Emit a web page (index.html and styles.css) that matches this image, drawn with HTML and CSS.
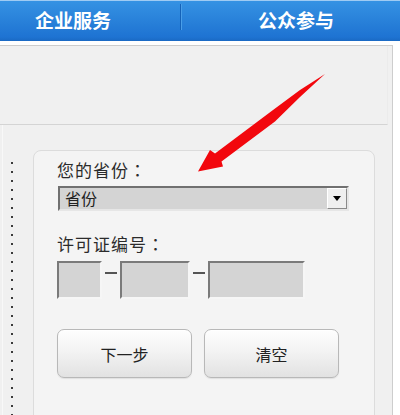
FILE: index.html
```html
<!DOCTYPE html>
<html lang="zh-CN">
<head>
<meta charset="utf-8">
<title>许可证查询</title>
<link rel="stylesheet" href="styles.css">
</head>
<body>
<nav class="nav">
  <div class="nav-item nav-first">企业服务</div>
  <span class="nav-sep"></span>
  <div class="nav-item nav-second">公众参与</div>
</nav>
<div class="panel">
  <div class="panel-top"></div>
  <div class="panel-body">
    <div class="rail"><div class="dots"></div></div>
    <form class="form-box" onsubmit="return false">
      <div class="label">您的省份<span class="colon" lang="zh-TW">：</span></div>
      <div class="select">
        <span class="select-text">省份</span>
        <span class="select-btn"><span class="tri"></span></span>
      </div>
      <div class="label label-2">许可证编号<span class="colon" lang="zh-TW">：</span></div>
      <div class="inputs">
        <div class="field f1"></div>
        <span class="dash"></span>
        <div class="field f2"></div>
        <span class="dash"></span>
        <div class="field f3"></div>
      </div>
      <div class="buttons">
        <button type="button" class="btn">下一步</button>
        <button type="button" class="btn">清空</button>
      </div>
    </form>
  </div>
</div>
<svg class="annot" width="400" height="415" viewBox="0 0 400 415" aria-hidden="true">
  <polygon points="198,171.5 210,150 215,153.5 273,110 300,90 325,74 300,97 275,121.5 221.5,161.5 223,166.5" fill="#f2070d"/>
</svg>
</body>
</html>
```

FILE: styles.css
```css
html, body {
  margin: 0;
  padding: 0;
  background: #ffffff;
  font-family: "Noto Sans CJK SC", "Noto Sans", sans-serif;
  overflow: hidden;
}

.nav {
  display: flex;
  height: 41px;
  box-sizing: border-box;
  border-top: 1px solid #9fcbf3;
  background: linear-gradient(#3592e3, #1e73d2 90%, #1a69c4);
  color: #ffffff;
  font-weight: bold;
  font-size: 19px;
  line-height: 38px;
}

.nav-item {
  white-space: nowrap;
}

.nav-first {
  width: 145px;
  padding-left: 35px;
}

.nav-sep {
  width: 1px;
  height: 26px;
  margin-top: 3px;
  background: #1462b8;
  box-shadow: 1px 0 0 #4a9ee8;
}

.nav-second {
  padding-left: 77px;
}

.panel {
  margin-top: 4px;
  width: 393px;
  height: 370px;
  box-sizing: border-box;
  border-top: 1px solid #cdcdcd;
  border-right: 1px solid #cdcdcd;
  background: #f0f0f0;
  overflow: hidden;
}

.panel-top {
  height: 79px;
  margin-right: 4px;
  box-sizing: border-box;
  border-bottom: 1px solid #d4d4d4;
  border-right: 1px solid #ebebeb;
}

.panel-body {
  display: flex;
  height: 300px;
}

.rail {
  flex: none;
  box-sizing: border-box;
  border-left: 1px solid #f8f8f8;
  margin-left: 2px;
  width: 31px;
  display: flex;
  flex-direction: column;
}

.dots {
  margin-top: 37px;
  margin-left: 8px;
  width: 2px;
  flex: 1;
  background-image: linear-gradient(#3a3a3a 2px, transparent 2px);
  background-size: 2px 9px;
  background-repeat: repeat-y;
}

.form-box {
  margin: 25px 0 0 0;
  width: 342px;
  height: 320px;
  box-sizing: border-box;
  border: 1px solid #dcdcdc;
  border-radius: 8px;
  background: #f4f4f4;
  padding: 8px 0 0 23px;
  color: #2b2b2b;
}

.label {
  font-size: 17px;
  line-height: 22px;
  letter-spacing: 1px;
}

.colon {
  font-family: "Noto Sans CJK TC", "Noto Sans CJK SC", sans-serif;
}

.label-2 {
  margin-top: 22px;
}

.select {
  margin-top: 5px;
  margin-left: 1px;
  width: 291px;
  height: 25px;
  box-sizing: border-box;
  border: 2px solid;
  border-color: #707070 #e6e6e6 #e6e6e6 #707070;
  background: #d4d4d4;
  display: flex;
  align-items: center;
  justify-content: space-between;
}

.select-text {
  padding-left: 5px;
  font-size: 16px;
  line-height: 21px;
  color: #222;
}

.select-btn {
  width: 20px;
  height: 21px;
  box-sizing: border-box;
  border: 1px solid;
  border-color: #ffffff #8a8a8a #8a8a8a #ffffff;
  background: #efefef;
  display: flex;
  align-items: center;
  justify-content: center;
}

.tri {
  width: 0;
  height: 0;
  border-left: 4px solid transparent;
  border-right: 4px solid transparent;
  border-top: 5px solid #000;
}

.inputs {
  margin-top: 6px;
  display: flex;
  align-items: flex-start;
}

.field {
  height: 38px;
  box-sizing: border-box;
  border: 2px solid;
  border-color: #7a7a7a #f6f6f6 #f6f6f6 #7a7a7a;
  background: #d4d4d4;
}

.f1 { width: 45px; }
.f2 { width: 70px; }
.f3 { width: 97px; }

.dash {
  width: 12px;
  height: 2px;
  margin: 11px 3px 0 3px;
  background: #555555;
}

.buttons {
  margin-top: 30px;
  display: flex;
  gap: 12px;
}

.btn {
  width: 135px;
  height: 49px;
  box-sizing: border-box;
  border: 1px solid #b8b8b8;
  border-radius: 7px;
  background: linear-gradient(#fefefe, #f3f3f3 45%, #e2e2e2);
  box-shadow: inset 0 1px 0 #ffffff, 0 1px 1px rgba(0,0,0,0.08);
  font-family: "Noto Sans CJK SC", "Noto Sans", sans-serif;
  font-size: 16px;
  color: #222;
  padding: 0;
}

.annot {
  position: absolute;
  top: 0;
  left: 0;
  pointer-events: none;
}
```
